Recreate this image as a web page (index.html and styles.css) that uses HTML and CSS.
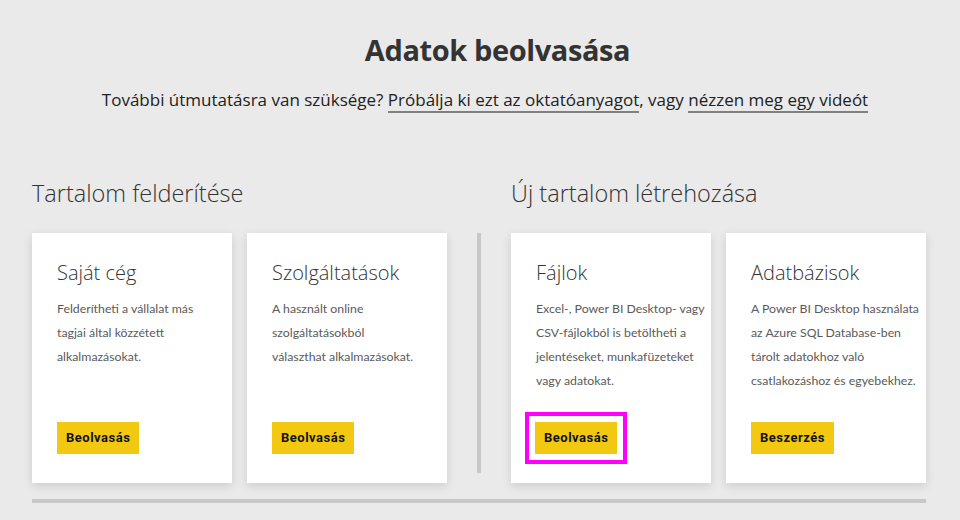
FILE: index.html
```html
<!DOCTYPE html>
<html lang="hu">
<head>
<meta charset="utf-8">
<title>Adatok beolvasása</title>
<link rel="stylesheet" href="styles.css">
</head>
<body>
<header class="hero">
  <h1 class="hero-title">Adatok beolvasása</h1>
  <p class="hero-sub">További útmutatásra van szüksége? <a class="link" href="#">Próbálja ki ezt az oktatóanyagot</a>, vagy <a class="link" href="#">nézzen meg egy videót</a></p>
</header>
<main class="sections">
  <section class="section">
    <h2 class="section-title">Tartalom felderítése</h2>
    <div class="cards">
      <div class="card">
        <h3 class="card-title">Saját cég</h3>
        <p class="card-text">Felderítheti a vállalat más<br>tagjai által közzétett<br>alkalmazásokat.</p>
        <div class="card-action"><span class="btn">Beolvasás</span></div>
      </div>
      <div class="card">
        <h3 class="card-title">Szolgáltatások</h3>
        <p class="card-text">A használt online<br>szolgáltatásokból<br>választhat alkalmazásokat.</p>
        <div class="card-action"><span class="btn">Beolvasás</span></div>
      </div>
    </div>
  </section>
  <div class="divider"></div>
  <section class="section">
    <h2 class="section-title">Új tartalom létrehozása</h2>
    <div class="cards">
      <div class="card">
        <h3 class="card-title">Fájlok</h3>
        <p class="card-text">Excel-, Power BI Desktop- vagy<br>CSV-fájlokból is betöltheti a<br>jelentéseket, munkafüzeteket<br>vagy adatokat.</p>
        <div class="card-action"><span class="highlight"><span class="btn">Beolvasás</span></span></div>
      </div>
      <div class="card">
        <h3 class="card-title">Adatbázisok</h3>
        <p class="card-text">A Power BI Desktop használata<br>az Azure SQL Database-ben<br>tárolt adatokhoz való<br>csatlakozáshoz és egyebekhez.</p>
        <div class="card-action"><span class="btn">Beszerzés</span></div>
      </div>
    </div>
  </section>
</main>
<div class="bottom-rule"></div>
</body>
</html>
```
FILE: styles.css
```css
html, body {
  margin: 0;
  padding: 0;
}
body {
  background: #eaeaea;
  font-family: "Open Sans", "Noto Sans", sans-serif;
  color: #333;
  width: 960px;
  height: 520px;
  overflow: hidden;
}
.hero {
  text-align: center;
  padding-top: 30px;
}
.hero-title {
  margin: 0;
  padding-left: 35px;
  font-size: 29px;
  letter-spacing: -0.4px;
  line-height: 40px;
  font-weight: 700;
  color: #333;
}
.hero-sub {
  margin: 19px 0 0;
  padding-left: 10px;
  font-size: 17px;
  line-height: 22px;
  color: #222;
}
.link {
  color: #222;
  text-decoration: none;
  border-bottom: 2px solid #808080;
}
.sections {
  display: flex;
  margin: 67px 0 0 32px;
  width: 894px;
}
.section {
  display: flex;
  flex-direction: column;
}
.section-title {
  margin: 0;
  font-size: 23.5px;
  line-height: 30px;
  font-weight: 300;
  color: #333;
}
.cards {
  display: flex;
  gap: 15px;
  margin-top: 25px;
}
.card {
  width: 200px;
  height: 250px;
  box-sizing: border-box;
  background: #fff;
  padding: 27px 6px 29px 25px;
  display: flex;
  flex-direction: column;
  box-shadow: 0 3px 9px rgba(0,0,0,0.13);
}
.card-title {
  margin: 0;
  font-size: 20px;
  line-height: 26px;
  font-weight: 300;
  color: #333;
}
.card-text {
  margin: 11px 0 0;
  font-family: "Lato", "Open Sans", sans-serif;
  font-size: 12.3px;
  line-height: 24px;
  color: #5a5a5a;
  white-space: nowrap;
}
.card-action {
  margin-top: auto;
  display: flex;
}
.btn {
  display: inline-block;
  background: #f2c811;
  color: #111;
  font-family: "Roboto", sans-serif;
  font-weight: 700;
  font-size: 13px;
  letter-spacing: 0.5px;
  height: 32px;
  line-height: 32px;
  padding: 0 9px;
}
.highlight {
  display: inline-block;
  border: 4px solid #ff00ff;
  padding: 6px;
  margin: -10px 0 -10px -11px;
  background: #fff;
}
.divider {
  width: 4px;
  background: #c8c8c8;
  margin: 55px 30px 10px;
}
.bottom-rule {
  margin: 16px 0 0 32px;
  width: 894px;
  height: 4px;
  background: #c8c8c8;
}
```
